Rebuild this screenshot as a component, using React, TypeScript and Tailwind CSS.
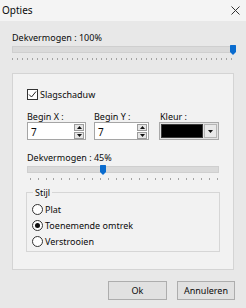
import React from "react"

const ticksOf = (n: number) => Array.from({ length: n }, (_, i) => i)

const Slider = (props: { thumbClass: string; ticks: number; tickClass: string }) => {
    return (
        <div>
            <div className="relative h-[7px] bg-[#dadada] border border-[#cfcfcf]">
                <svg className={"absolute top-[-2px] w-[6px] h-[10px] " + props.thumbClass} viewBox="0 0 6 10">
                    <path d="M0 0.5 Q0 0 0.5 0 H5.5 Q6 0 6 0.5 V7 L3 10 L0 7 Z" fill="#0a6ccf" />
                </svg>
            </div>
            <div className={"mt-[5px] flex justify-between " + props.tickClass}>
                {ticksOf(props.ticks).map((i) => (
                    <div key={i} className="w-px h-[2px] bg-[#a3a3a3]" />
                ))}
            </div>
        </div>
    )
}

const SpinBox = (props: { width: string }) => {
    return (
        <div className={"relative h-[18px] bg-white border border-[#a5a5a5] " + props.width}>
            <span className="absolute left-[3px] top-[2px] text-[10px] leading-[14px]">7</span>
            <div className="absolute right-[1px] top-[1px] flex flex-col gap-[1px]">
                <div className="w-[10px] h-[7px] bg-[#e6e6e6] border border-[#9c9c9c] flex items-center justify-center">
                    <svg width="5" height="3" viewBox="0 0 5 3"><path d="M0 3 L2.5 0 L5 3 Z" fill="#111" /></svg>
                </div>
                <div className="w-[10px] h-[7px] bg-[#e6e6e6] border border-[#9c9c9c] flex items-center justify-center">
                    <svg width="5" height="3" viewBox="0 0 5 3"><path d="M0 0 L5 0 L2.5 3 Z" fill="#111" /></svg>
                </div>
            </div>
        </div>
    )
}

const Radio = (props: { label: string; checked?: boolean }) => {
    return (
        <div className="h-[16px] flex items-center gap-[2px]">
            <div className="w-[11px] h-[11px] rounded-full border border-[#333] bg-white flex items-center justify-center">
                {props.checked && <div className="w-[5px] h-[5px] rounded-full bg-[#111]" />}
            </div>
            <span>{props.label}</span>
        </div>
    )
}

export default function App() {
    return (
        <div className="w-[246px] h-[308px] bg-[#e8e8e8] text-[9px] leading-[13px] text-[#0a0a0a] font-['Noto_Sans',sans-serif] flex flex-col">
            {/* title bar */}
            <div className="h-[21px] bg-[#f4f4f4] flex items-center justify-between pl-[2px] pr-[6px]">
                <span className="text-[10px]">Opties</span>
                <svg width="9" height="9" viewBox="0 0 9 9">
                    <path d="M0.5 0.5 L8.5 8.5 M8.5 0.5 L0.5 8.5" stroke="#333" strokeWidth="1" />
                </svg>
            </div>

            <div className="px-[12px] pt-[10px]">
                <div>Dekvermogen : 100%</div>
                <div className="mt-[2px]">
                    <Slider thumbClass="left-[217px]" ticks={45} tickClass="pr-[2px]" />
                </div>

                {/* main panel */}
                <div className="mt-[13px] bg-[#f2f2f2] border border-[#d4d4d4] pl-[14px] pt-[14px] pb-[17px]">
                    <div className="h-[13px] flex items-center gap-[2px]">
                        <div className="w-[11px] h-[11px] border border-[#333] bg-white flex items-center justify-center">
                            <svg width="9" height="9" viewBox="0 0 9 9">
                                <path d="M1 4.5 L3.5 7 L8 1.5" stroke="#222" strokeWidth="1" fill="none" />
                            </svg>
                        </div>
                        <span>Slagschaduw</span>
                    </div>

                    <div className="mt-[11px] flex">
                        <div className="w-[67px]">
                            <div className="leading-[10px]">Begin X :</div>
                            <SpinBox width="w-[59px]" />
                        </div>
                        <div className="w-[65px]">
                            <div className="leading-[10px]">Begin Y :</div>
                            <SpinBox width="w-[55px]" />
                        </div>
                        <div>
                            <div className="leading-[10px] pl-[1px]">Kleur :</div>
                            <div className="w-[60px] h-[18px] bg-[#e3e3e3] border border-[#a9a9a9] flex p-[1px] gap-[1px]">
                                <div className="flex-1 bg-black border border-[#3a3a3a]" />
                                <div className="w-[13px] bg-[#e9e9e9] border border-[#b5b5b5] flex items-center justify-center">
                                    <svg width="5" height="3" viewBox="0 0 5 3"><path d="M0 0 L5 0 L2.5 3 Z" fill="#111" /></svg>
                                </div>
                            </div>
                        </div>
                    </div>

                    <div className="mt-[11px]">Dekvermogen : 45%</div>
                    <div className="mt-[2px] w-[192px]">
                        <Slider thumbClass="left-[72px]" ticks={25} tickClass="pl-[3px] pr-[1px]" />
                    </div>

                    <fieldset className="mt-[6px] -ml-px w-[194px] border border-[#d6d6d6] pl-[5px] pt-[2px] pb-[2px]">
                        <legend className="ml-[1px] px-[2px]">Stijl</legend>
                        <Radio label="Plat" />
                        <Radio label="Toenemende omtrek" checked />
                        <Radio label="Verstrooien" />
                    </fieldset>
                </div>
            </div>

            <div className="mt-[11px] flex justify-end gap-[10px] pr-[11px]">
                <button className="w-[59px] h-[19px] bg-[#e1e1e1] border border-[#adadad] leading-[17px]">Ok</button>
                <button className="w-[58px] h-[19px] bg-[#e1e1e1] border border-[#adadad] leading-[17px]">Annuleren</button>
            </div>
        </div>
    )
}
